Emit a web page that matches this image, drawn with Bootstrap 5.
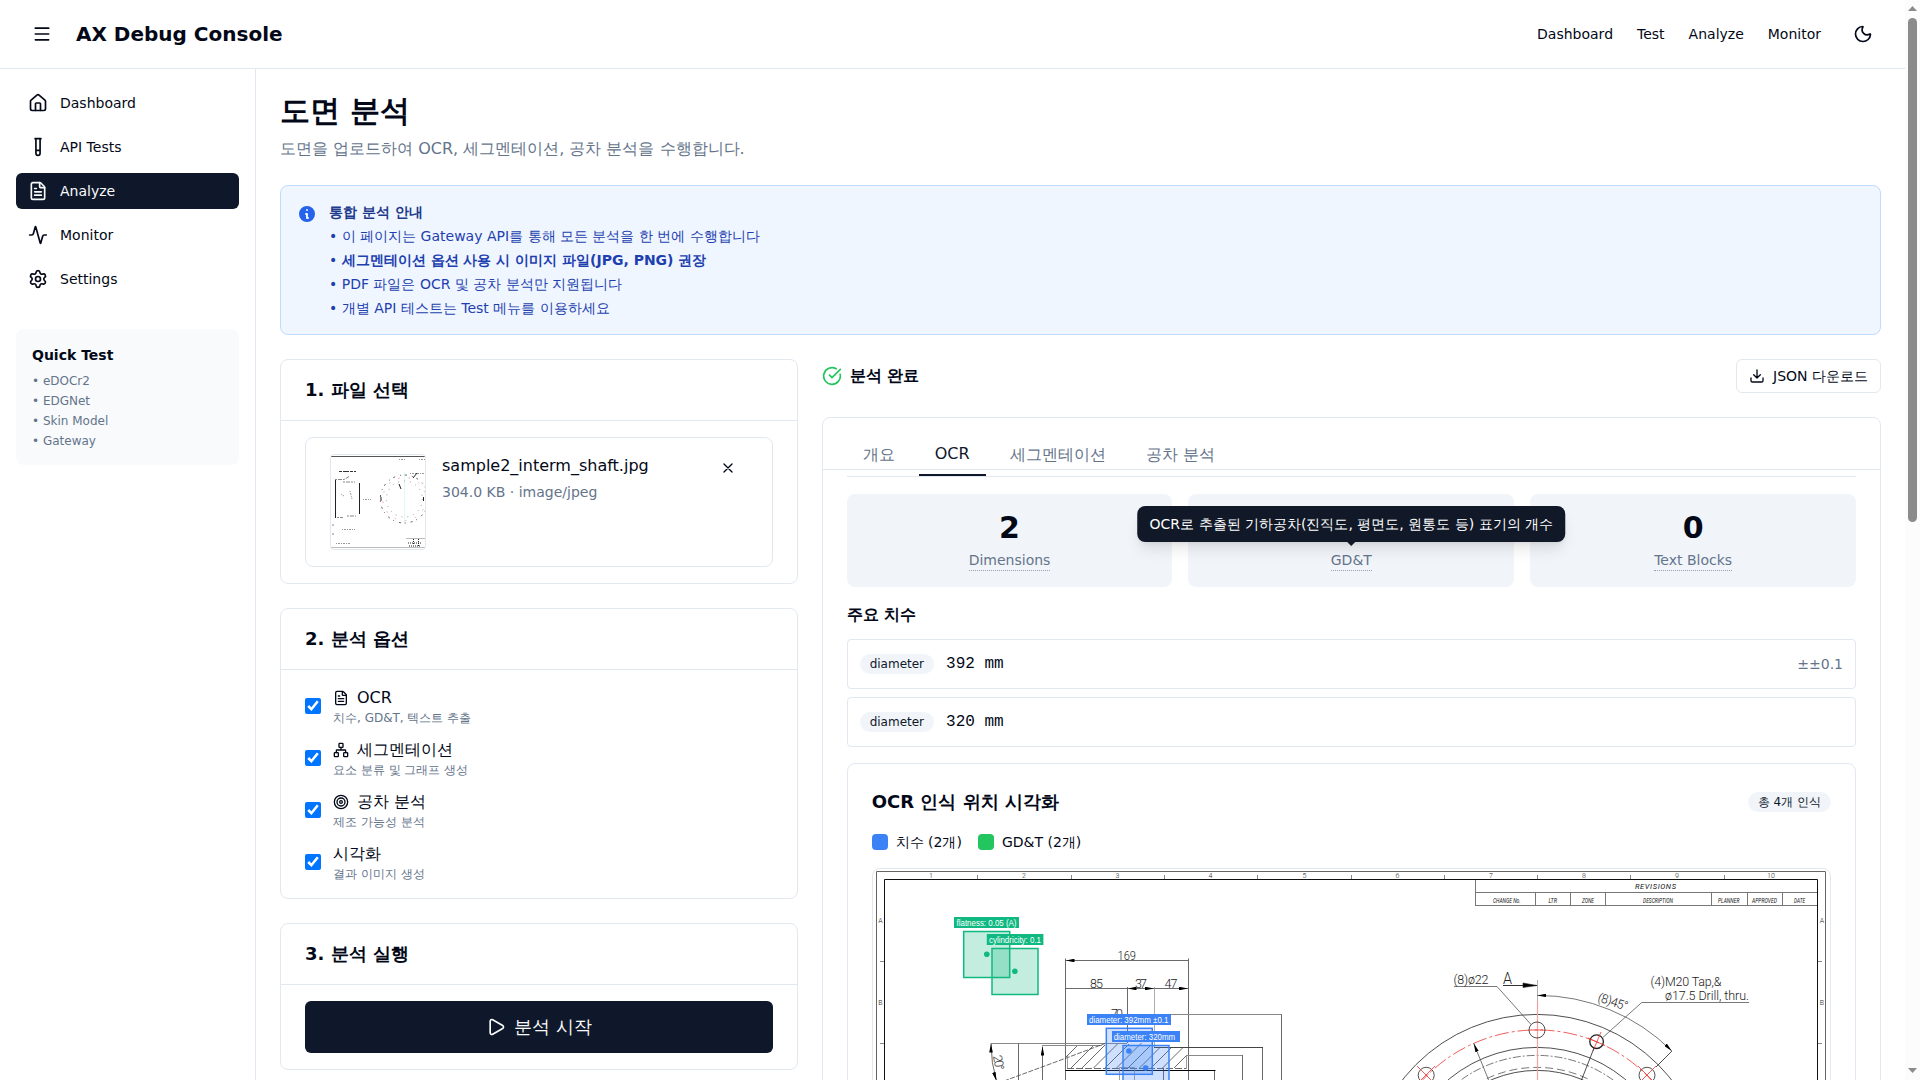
<!DOCTYPE html>
<html lang="ko">
<head>
<meta charset="utf-8">
<title>AX Debug Console</title>
<meta name="viewport" content="width=device-width, initial-scale=1">
<link href="https://cdn.jsdelivr.net/npm/bootstrap@5.3.0/dist/css/bootstrap.min.css" rel="stylesheet">
<style>
:root{--ink:#020817;--muted:#64748b;--line:#e2e8f0;--navy:#0f172a;--soft:#f1f5f9}
html,body{height:1080px;overflow:hidden}
body{font-family:"DejaVu Sans",sans-serif;font-size:16px;line-height:24px;color:var(--ink);background:#fff}
h1,h2,h3,h4,p,ul{margin:0}
.shell{width:1905px;height:1080px;overflow:hidden}
.topbar{height:69px;padding:16px 24px;border-bottom:1px solid var(--line)}
.brand{font-size:20px;line-height:28px;font-weight:700}
.topnav a,.sidenav a{color:var(--ink);text-decoration:none;font-size:14px;line-height:20px}
.ico{fill:none;stroke:currentColor;stroke-width:2;stroke-linecap:round;stroke-linejoin:round;flex-shrink:0;display:block}
.iconbtn{width:36px;height:36px;padding:8px;border:0;background:none;color:var(--ink)}
.sidebar{width:256px;height:1011px;padding:16px;border-right:1px solid var(--line);flex-shrink:0}
.sidenav a{height:36px;padding:8px 12px;border-radius:6px;gap:12px}
.sidenav a.current{background:var(--navy);color:#f8fafc}
.quick{margin-top:32px;padding:16px;border-radius:8px;background:#f8fafc}
.quick h3{font-size:14px;line-height:20px;font-weight:700;margin-bottom:8px}
.quick li{font-size:12px;line-height:16px;color:var(--muted)}
.page{padding:24px;min-width:0}
.page-title{font-size:30px;line-height:36px;font-weight:700}
.notice{padding:16px;border:1px solid #bfdbfe;border-radius:8px;background:#eff6ff;color:#1e40af;font-size:14px;line-height:20px;gap:12px}
.notice svg{margin-top:2px}
.notice h3{font-size:14px;line-height:20px;font-weight:700;color:#1e3a8a}
.layout{display:grid;grid-template-columns:repeat(3,minmax(0,1fr));gap:24px}
.span-two{grid-column:span 2}
.panel{border:1px solid var(--line);border-radius:8px}
.panel-head{height:61px;padding:16px 24px;border-bottom:1px solid var(--line)}
.panel-head h2,.viz h2{font-size:18px;line-height:28px;font-weight:700}
.panel-body{padding:16px 24px}
.filebox{border:1px solid var(--line);border-radius:8px;padding:16px 24px;height:130px}
.thumb{width:96px;height:96px;border:1px solid var(--line);border-radius:4px;overflow:hidden;flex-shrink:0}
.remove{width:40px;height:28px;padding:0;border:0;background:none;color:var(--ink)}
.gap-12{gap:12px}
.sm{font-size:14px;line-height:20px}
.dim{color:var(--muted)}
.opt input{width:16px;height:16px;margin:0;flex-shrink:0}
.opt .desc{font-size:12px;line-height:16px;color:var(--muted)}
.run{height:52px;border:0;border-radius:6px;background:var(--navy);color:#f8fafc;font-size:18px;line-height:28px}
.outline{height:34px;border:1px solid var(--line);border-radius:6px;padding:0 12px;background:#fff;color:var(--ink);font-size:14px;line-height:20px}
.ok{color:#22c55e}
.tabhead{height:52px;padding:16px 24px 0;border-bottom:1px solid var(--line)}
.tabs{height:43px;border-bottom:1px solid var(--line)}
.tabs button{border:0;border-bottom:2px solid transparent;background:none;padding:9px 16px 7px;height:42px;color:var(--muted);line-height:24px}
.tabs button.on{border-bottom-color:var(--navy);color:var(--navy);padding:8px 16px}
.results{padding:24px}
.stat{background:var(--soft);border-radius:8px;padding:16px;height:93px}
.num{font-size:30px;line-height:36px;font-weight:700}
.hint{font-size:14px;line-height:20px;color:var(--muted);border-bottom:1px dotted #94a3b8;margin-top:4px;position:relative}
.tipbox{position:absolute;left:50%;bottom:calc(100% + 8px);transform:translateX(-50%);background:#111827;color:#fff;white-space:nowrap;border-radius:8px;padding:8px 12px;box-shadow:0 10px 15px -3px rgba(0,0,0,.1),0 4px 6px -4px rgba(0,0,0,.1);z-index:5}
.tipbox::after{content:"";position:absolute;left:50%;bottom:-4px;margin-left:-4px;border:4px solid transparent;border-bottom:0;border-top-color:#111827}
.row-item{border:1px solid var(--line);border-radius:4px;padding:12px;height:50px}
.pill{height:20px;border-radius:10px;background:var(--soft);padding:2px 10px;font-size:12px;line-height:16px;color:var(--navy)}
.mono{font-family:"Liberation Mono",monospace}
.viz{border:1px solid var(--line);border-radius:8px;padding:24px}
.swatch{width:16px;height:16px;border-radius:4px}
.swatch-dim{background:#3b82f6}
.swatch-gdt{background:#22c55e}
.canvas-box{border:1px solid var(--line);border-radius:8px;overflow:hidden}
.canvas-box svg,.thumb svg{display:block}
.scroller{position:fixed;right:0;top:0;width:15px;height:1080px;background:#fcfcfc}
.cad text{font-family:Roboto,sans-serif;font-weight:300;fill:#222}
.cad .rev text{font-weight:400;fill:#111}
.cad .tag text{font-family:"Liberation Sans",sans-serif;font-weight:400;fill:#fff;font-size:8.6px}
</style>
<script src="https://cdn.jsdelivr.net/npm/bootstrap@5.3.0/dist/js/bootstrap.bundle.min.js"></script>
</head>
<body>
<div class="shell">
<header class="topbar d-flex align-items-center justify-content-between">
  <div class="d-flex align-items-center gap-3">
    <button class="iconbtn" aria-label="menu"><svg class="ico" width="20" height="20" viewBox="0 0 24 24"><path d="M4 5h16M4 12h16M4 19h16"/></svg></button>
    <div class="brand">AX Debug Console</div>
  </div>
  <nav class="topnav d-flex align-items-center gap-4">
    <a href="#">Dashboard</a><a href="#">Test</a><a href="#">Analyze</a><a href="#">Monitor</a>
    <button class="iconbtn" aria-label="theme"><svg class="ico" width="20" height="20" viewBox="0 0 24 24"><path d="M20.985 12.486a9 9 0 1 1-9.473-9.472c.405-.022.617.46.402.803a6 6 0 0 0 8.268 8.268c.344-.215.825-.004.803.401"/></svg></button>
  </nav>
</header>
<div class="d-flex">
<aside class="sidebar">
  <nav class="sidenav d-flex flex-column gap-2">
    <a href="#" class="d-flex align-items-center"><svg class="ico" width="20" height="20" viewBox="0 0 24 24"><path d="M15 21v-8a1 1 0 0 0-1-1h-4a1 1 0 0 0-1 1v8"/><path d="M3 10a2 2 0 0 1 .709-1.528l7-6a2 2 0 0 1 2.582 0l7 6A2 2 0 0 1 21 10v9a2 2 0 0 1-2 2H5a2 2 0 0 1-2-2z"/></svg>Dashboard</a>
    <a href="#" class="d-flex align-items-center"><svg class="ico" width="20" height="20" viewBox="0 0 24 24"><path d="M14.5 2v17.5c0 1.4-1.1 2.5-2.5 2.5c-1.4 0-2.5-1.1-2.5-2.5V2M8.5 2h7M14.5 16h-5"/></svg>API Tests</a>
    <a href="#" class="current d-flex align-items-center"><svg class="ico" width="20" height="20" viewBox="0 0 24 24"><path d="M6 22a2 2 0 0 1-2-2V4a2 2 0 0 1 2-2h8a2.4 2.4 0 0 1 1.704.706l3.588 3.588A2.4 2.4 0 0 1 20 8v12a2 2 0 0 1-2 2z"/><path d="M14 2v5a1 1 0 0 0 1 1h5M10 9H8M16 13H8M16 17H8"/></svg>Analyze</a>
    <a href="#" class="d-flex align-items-center"><svg class="ico" width="20" height="20" viewBox="0 0 24 24"><path d="M22 12h-2.48a2 2 0 0 0-1.93 1.46l-2.35 8.36a.25.25 0 0 1-.48 0L9.24 2.18a.25.25 0 0 0-.48 0l-2.35 8.36A2 2 0 0 1 4.49 12H2"/></svg>Monitor</a>
    <a href="#" class="d-flex align-items-center"><svg class="ico" width="20" height="20" viewBox="0 0 24 24"><path d="M9.671 4.136a2.34 2.34 0 0 1 4.659 0 2.34 2.34 0 0 0 3.319 1.915 2.34 2.34 0 0 1 2.33 4.033 2.34 2.34 0 0 0 0 3.831 2.34 2.34 0 0 1-2.33 4.033 2.34 2.34 0 0 0-3.319 1.915 2.34 2.34 0 0 1-4.659 0 2.34 2.34 0 0 0-3.32-1.915 2.34 2.34 0 0 1-2.33-4.033 2.34 2.34 0 0 0 0-3.831A2.34 2.34 0 0 1 6.35 6.051a2.34 2.34 0 0 0 3.319-1.915"/><circle cx="12" cy="12" r="3"/></svg>Settings</a>
  </nav>
  <div class="quick">
    <h3>Quick Test</h3>
    <ul class="list-unstyled d-flex flex-column gap-1"><li>• eDOCr2</li><li>• EDGNet</li><li>• Skin Model</li><li>• Gateway</li></ul>
  </div>
</aside>
<main class="page flex-grow-1">
  <h1 class="page-title mb-2">도면 분석</h1>
  <p class="dim mb-4">도면을 업로드하여 OCR, 세그멘테이션, 공차 분석을 수행합니다.</p>
  <section class="notice d-flex mb-4">
    <svg class="flex-shrink-0" width="20" height="20" viewBox="0 0 20 20" fill="#2563eb"><path fill-rule="evenodd" d="M18 10a8 8 0 11-16 0 8 8 0 0116 0zm-7-4a1 1 0 11-2 0 1 1 0 012 0zM9 9a1 1 0 000 2v3a1 1 0 001 1h1a1 1 0 100-2v-3a1 1 0 00-1-1H9z" clip-rule="evenodd"/></svg>
    <div class="d-flex flex-column gap-1">
      <h3>통합 분석 안내</h3>
      <div>• 이 페이지는 Gateway API를 통해 모든 분석을 한 번에 수행합니다</div>
      <div>• <b>세그멘테이션 옵션 사용 시 이미지 파일(JPG, PNG) 권장</b></div>
      <div>• PDF 파일은 OCR 및 공차 분석만 지원됩니다</div>
      <div>• 개별 API 테스트는 Test 메뉴를 이용하세요</div>
    </div>
  </section>
  <div class="layout">
    <div class="d-flex flex-column gap-4">
      <section class="panel">
        <div class="panel-head"><h2>1. 파일 선택</h2></div>
        <div class="panel-body">
          <div class="filebox d-flex gap-3">
            <div class="thumb"><svg width="94" height="94" viewBox="331 455 94 94" fill="none" stroke="#333" stroke-width="1">
              <path d="M331 456.500h94" stroke="#555"/><path d="M331 547.500h94M406 538.500h19" stroke="#bbb"/>
              <path d="M335.500 479v39M359.500 483v31" stroke="#222"/>
              <path d="M339 471.500h17" stroke-dasharray="3 1 6 1"/><path d="M335 479.500h9l5-3M343 482h12M337 517.500h6M347 516h9M332 525h3M332 534h3" stroke-dasharray="2 1 4 1" stroke="#888"/>
              <path d="M342 529.500h13M336 543.500h14M363 499.500h8M341 494l3 2M350 491l2 8M399 459.500h7M419 459.500h6M410 473.500h15" stroke-dasharray="1 1 2 1" stroke="#999"/>
              <path d="M404.500 472v52" stroke="#dffaf8"/>
              <circle cx="404.300" cy="499" r="24" stroke="#555" stroke-dasharray="1 4 2 5"/><circle cx="404.300" cy="499" r="21.500" stroke="#f2a5a5" stroke-dasharray="1.500 9"/><circle cx="404.300" cy="499" r="18" stroke="#999" stroke-dasharray="1 5"/>
              <path d="M381 497v4M423.500 497v4M399 484l2 5M417 473l-4 5" stroke="#222"/>
              <path d="M408 543h14M409 546h12M413.500 539v6M418.500 539v7" stroke-dasharray="1 1" stroke="#222"/></svg></div>
            <div class="flex-grow-1"><div>sample2_interm_shaft.jpg</div><div class="sm dim mt-1">304.0 KB · image/jpeg</div></div>
            <button class="remove d-flex align-items-center justify-content-center" aria-label="remove"><svg class="ico" width="16" height="16" viewBox="0 0 24 24"><path d="M18 6 6 18M6 6l12 12"/></svg></button>
          </div>
        </div>
      </section>
      <section class="panel">
        <div class="panel-head"><h2>2. 분석 옵션</h2></div>
        <div class="panel-body d-flex flex-column gap-12">
          <label class="opt d-flex align-items-center gap-12"><input type="checkbox" checked><span><span class="d-flex align-items-center gap-2"><svg class="ico" width="16" height="16" viewBox="0 0 24 24"><path d="M6 22a2 2 0 0 1-2-2V4a2 2 0 0 1 2-2h8a2.4 2.4 0 0 1 1.704.706l3.588 3.588A2.4 2.4 0 0 1 20 8v12a2 2 0 0 1-2 2z"/><path d="M14 2v5a1 1 0 0 0 1 1h5M10 9H8M16 13H8M16 17H8"/></svg>OCR</span><span class="desc d-block">치수, GD&amp;T, 텍스트 추출</span></span></label>
          <label class="opt d-flex align-items-center gap-12"><input type="checkbox" checked><span><span class="d-flex align-items-center gap-2"><svg class="ico" width="16" height="16" viewBox="0 0 24 24"><rect x="16" y="16" width="6" height="6" rx="1"/><rect x="2" y="16" width="6" height="6" rx="1"/><rect x="9" y="2" width="6" height="6" rx="1"/><path d="M5 16v-3a1 1 0 0 1 1-1h12a1 1 0 0 1 1 1v3M12 12V8"/></svg>세그멘테이션</span><span class="desc d-block">요소 분류 및 그래프 생성</span></span></label>
          <label class="opt d-flex align-items-center gap-12"><input type="checkbox" checked><span><span class="d-flex align-items-center gap-2"><svg class="ico" width="16" height="16" viewBox="0 0 24 24"><circle cx="12" cy="12" r="10"/><circle cx="12" cy="12" r="6"/><circle cx="12" cy="12" r="2"/></svg>공차 분석</span><span class="desc d-block">제조 가능성 분석</span></span></label>
          <label class="opt d-flex align-items-center gap-12"><input type="checkbox" checked><span><span class="d-block">시각화</span><span class="desc d-block">결과 이미지 생성</span></span></label>
        </div>
      </section>
      <section class="panel">
        <div class="panel-head"><h2>3. 분석 실행</h2></div>
        <div class="panel-body">
          <button class="run w-100 d-flex align-items-center justify-content-center gap-2"><svg class="ico" width="20" height="20" viewBox="0 0 24 24"><path d="M5 5a2 2 0 0 1 3.008-1.728l11.997 6.998a2 2 0 0 1 .003 3.458l-12 7A2 2 0 0 1 5 19z"/></svg>분석 시작</button>
        </div>
      </section>
    </div>
    <div class="span-two d-flex flex-column gap-4">
      <div class="d-flex align-items-center justify-content-between">
        <div class="d-flex align-items-center gap-2 fw-bold"><svg class="ico ok" width="20" height="20" viewBox="0 0 24 24"><path d="M21.801 10A10 10 0 1 1 17 3.335"/><path d="m9 11 3 3L22 4"/></svg>분석 완료</div>
        <button class="outline d-flex align-items-center gap-2"><svg class="ico" width="16" height="16" viewBox="0 0 24 24"><path d="M12 15V3M21 15v4a2 2 0 0 1-2 2H5a2 2 0 0 1-2-2v-4M7 10l5 5 5-5"/></svg>JSON 다운로드</button>
      </div>
      <section class="panel">
        <div class="tabhead"><div class="tabs d-flex gap-2"><button>개요</button><button class="on">OCR</button><button>세그멘테이션</button><button>공차 분석</button></div></div>
        <div class="results d-flex flex-column gap-3">
          <div class="row g-3">
            <div class="col-4"><div class="stat d-flex flex-column align-items-center"><div class="num">2</div><div class="hint">Dimensions</div></div></div>
            <div class="col-4"><div class="stat d-flex flex-column align-items-center"><div class="num">2</div><div class="hint">GD&amp;T<div class="tipbox">OCR로 추출된 기하공차(진직도, 평면도, 원통도 등) 표기의 개수</div></div></div></div>
            <div class="col-4"><div class="stat d-flex flex-column align-items-center"><div class="num">0</div><div class="hint">Text Blocks</div></div></div>
          </div>
          <div class="d-flex flex-column gap-12">
            <div class="fw-bold">주요 치수</div>
            <div class="d-flex flex-column gap-2">
              <div class="row-item d-flex align-items-center justify-content-between"><div class="d-flex align-items-center gap-12"><span class="pill">diameter</span><span class="mono">392 mm</span></div><span class="sm dim">±±0.1</span></div>
              <div class="row-item d-flex align-items-center justify-content-between"><div class="d-flex align-items-center gap-12"><span class="pill">diameter</span><span class="mono">320 mm</span></div></div>
            </div>
          </div>
          <div class="viz d-flex flex-column gap-3">
            <div class="d-flex align-items-center justify-content-between"><h2>OCR 인식 위치 시각화</h2><span class="pill">총 4개 인식</span></div>
            <div class="d-flex gap-3 sm"><span class="d-flex align-items-center gap-2"><i class="swatch swatch-dim"></i>치수 (2개)</span><span class="d-flex align-items-center gap-2"><i class="swatch swatch-gdt"></i>GD&amp;T (2개)</span></div>
            <div class="canvas-box">
<svg class="cad" width="957" height="300" viewBox="873 869 957 300" fill="none" stroke="#222" stroke-width=".8">
  <defs><marker id="tip" viewBox="0 0 10 4" refX="10" refY="2" markerWidth="9" markerHeight="3.600" markerUnits="userSpaceOnUse" orient="auto-start-reverse"><path d="M0 0L10 2L0 4z" fill="#000" stroke="none"/></marker></defs>
  <g>
    <path d="M876.500 1169V871.500H1825.500V1169" stroke="#666" stroke-width="1"/>
    <path d="M884.500 1169V879.500H1817.500V1169" stroke="#111" stroke-width="1"/>
    <path d="M977.500 875v4M1071.500 875v4M1164.500 875v4M1257.500 875v4M1351.500 875v4M1444.500 875v4M1537.500 875v4M1630.500 875v4M1724.500 875v4M880 961.500h4M880 1043.500h4M1818 961.500h4M1818 1043.500h4" stroke="#888" stroke-width="1"/>
  </g>
  <g font-size="7" text-anchor="middle" stroke="none">
    <text x="931" y="878">1</text><text x="1024" y="878">2</text><text x="1117.500" y="878">3</text><text x="1210.500" y="878">4</text><text x="1304.500" y="878">5</text><text x="1397.500" y="878">6</text><text x="1491" y="878">7</text><text x="1584" y="878">8</text><text x="1677" y="878">9</text><text x="1771" y="878">10</text>
    <text x="880.500" y="922.500">A</text><text x="880.500" y="1005">B</text><text x="1822" y="922.500">A</text><text x="1822" y="1005">B</text>
  </g>
  <g stroke="#777" stroke-width="1"><path d="M1475.500 880v26M1475 892.500H1817M1475 905.500H1817M1535.500 893v13M1570.500 893v13M1605.500 893v13M1711.500 893v13M1747.500 893v13M1782.500 893v13"/></g>
  <g class="rev" font-size="8" font-style="italic" stroke="none">
    <text x="1635" y="889" font-size="7.500" textLength="41" lengthAdjust="spacing">REVISIONS</text>
    <text x="1493" y="903" textLength="27.500" lengthAdjust="spacingAndGlyphs">CHANGE No.</text><text x="1548.500" y="903" textLength="8.500" lengthAdjust="spacingAndGlyphs">LTR</text><text x="1582" y="903" textLength="12" lengthAdjust="spacingAndGlyphs">ZONE</text><text x="1643" y="903" textLength="30" lengthAdjust="spacingAndGlyphs">DESCRIPTION</text><text x="1718" y="903" textLength="21.500" lengthAdjust="spacingAndGlyphs">PLANNER</text><text x="1752" y="903" textLength="25" lengthAdjust="spacingAndGlyphs">APPROVED</text><text x="1794" y="903" textLength="11" lengthAdjust="spacingAndGlyphs">DATE</text>
  </g>
  <!-- shaft section -->
  <g stroke="#444">
    <path d="M1065.500 958.500V1169M1188.500 958.500V1169M1127.500 987v56"/><path d="M1154.500 987v60" stroke="#999"/>
    <path d="M1065.500 960.500H1188M1065.500 988.500H1127M1154.500 988.500H1188" marker-start="url(#tip)" marker-end="url(#tip)"/><path d="M1127.500 988.500H1154" marker-start="url(#tip)" marker-end="url(#tip)"/>
    <path d="M1154 1014.500H1282M1186 1055.500H1243M991 1043.500H1127M1042 1045.500H1102" stroke="#888" stroke-width="1"/><path d="M1154 1047.500H1263" stroke-width="1"/>
    <path d="M1281.500 1169V1014.500M1262.500 1169V1047.500M1242.500 1169V1055.500M1214.500 1169V1070.500M1163.500 1169V1068M1018.500 1169V1043.500M1042.500 1169V1046.500" marker-end="url(#tip)"/>
    <path d="M1065.500 1070.500H1215.500" stroke="#000" stroke-width="1"/>
    <path d="M991 1043.500Q991 1063 996.500 1081" marker-start="url(#tip)" marker-end="url(#tip)"/>
    <path d="M1004 1081L1065 1058.500L1105 1043.500" stroke-dasharray="5 1.500"/>
    <path d="M1067 1068.500H1186.500" stroke-dasharray="7 2"/><path d="M1067.500 1055v13M1186.500 1055.500v13M1119.500 1169V1067.500H1134.500V1169" stroke="#888"/>
    <path d="M1066 1057l11-11M1071 1068l22-22M1082 1068l23-23M1093.500 1068l24-24M1105 1068l24-24M1116.500 1068l25-25M1128 1068l22-22M1139.500 1068l20-20M1151 1068l20-20M1162.500 1068l20-20M1174 1068l12-12"/>
  </g>
  <g font-size="12.500" stroke="none"><text x="1117.500" y="959.500" textLength="18.500" lengthAdjust="spacingAndGlyphs">169</text><text x="1090" y="987.500" textLength="13">85</text><text x="1135" y="987.500" textLength="12">37</text><text x="1164.500" y="987.500" textLength="13">47</text><text x="1111" y="1018" textLength="12">70</text><text transform="translate(993 1056) rotate(80)" textLength="15">20°</text></g>
  <!-- flange face -->
  <g>
    <circle cx="1537" cy="1185.400" r="171"/><circle cx="1537" cy="1185.400" r="138"/><circle cx="1537" cy="1185.400" r="115"/>
    <circle cx="1537" cy="1185.400" r="130" stroke="#555" stroke-dasharray="8 2 2 2"/><circle cx="1537" cy="1185.400" r="118" stroke="#555" stroke-dasharray="8 4"/>
    <circle cx="1537" cy="1185.400" r="155.500" stroke="#e33" stroke-dasharray="14 3 3 3"/>
    <path d="M1537.500 1001v168" stroke="#f3a0a0" stroke-width="1.200"/><path d="M1537.500 980v21" stroke="#999"/>
    <circle cx="1537" cy="1030" r="8"/><circle cx="1596.600" cy="1041.700" r="6.800" stroke-width="1.300"/><circle cx="1647" cy="1075.300" r="8"/><circle cx="1426.200" cy="1075.300" r="8"/>
    <path d="M1593 1051l8-19M1588 1038l17 7.500M1638 1066l18 18M1656 1066l-18 18M1417 1066l18 18M1435 1066l-18 18M1531 1030h12" stroke="#e33"/>
    <path d="M1672 1051l-16 16M1594 1048L1581.500 1080"/>
    <path d="M1537.400 995.400A190 190 0 0 1 1671.800 1051" marker-start="url(#tip)" marker-end="url(#tip)" stroke="#555"/>
    <path d="M1454 986.500H1497L1531 1024.500M1749 1002.500H1641.700L1603 1037.300M1489 1081L1473.700 1043.300" marker-end="url(#tip)" stroke="#555"/>
    <path d="M1503 985.500H1537" stroke="#333" stroke-width="1"/><path d="M1523 983l14 2.500-14 2z" stroke-width=".6" fill="#000"/>
  </g>
  <g font-size="12.500" stroke="none">
    <text x="1453.500" y="983.500" textLength="35">(8)ø22</text><text x="1503" y="984" font-size="17" textLength="9" lengthAdjust="spacingAndGlyphs">A</text>
    <text x="1650.500" y="985.500" textLength="71">(4)M20 Tap,&amp;</text><text x="1665" y="1000" textLength="84">ø17.5 Drill, thru.</text>
    <text transform="translate(1597 1001) rotate(18)" textLength="31">(8)45°</text>
  </g>
  <!-- recognised regions -->
  <g stroke="#10b981" stroke-width="1.500" fill="#10b981" fill-opacity=".25"><rect x="963.700" y="931.500" width="46" height="46"/><rect x="992" y="948.500" width="46" height="46"/></g>
  <g stroke="#3b82f6" stroke-width="1.500" fill="#3b82f6" fill-opacity=".25"><rect x="1106.300" y="1028.300" width="46" height="46"/><rect x="1123" y="1045.500" width="46" height="46"/></g>
  <g stroke="none"><g fill="#10b981"><circle cx="986.800" cy="954.300" r="2.800"/><circle cx="1014.900" cy="971.300" r="2.800"/><path d="M954 917h65v11h-65zM986.800 934h56.600v11h-56.600z"/></g>
  <g fill="#3b82f6"><circle cx="1128.900" cy="1051" r="2.800"/><circle cx="1145.700" cy="1068" r="2.800"/><path d="M1087 1014h84v11h-84zM1112 1031h68v11h-68z"/></g></g>
  <g class="tag" stroke="none"><text x="956.500" y="926" textLength="60" lengthAdjust="spacingAndGlyphs">flatness: 0.05 (A)</text><text x="989" y="943" textLength="52" lengthAdjust="spacingAndGlyphs">cylindricity: 0.1</text><text x="1089" y="1023" textLength="79.500" lengthAdjust="spacingAndGlyphs">diameter: 392mm ±0.1</text><text x="1113.700" y="1040" textLength="61.500" lengthAdjust="spacingAndGlyphs">diameter: 320mm</text></g>
</svg>
            </div>
          </div>
        </div>
      </section>
    </div>
  </div>
</main>
</div>
</div>
<div class="scroller"><svg class="d-block" width="15" height="1080"><path d="M3 11L7.500 6L12 11zM3 1068h9l-4.500 5z" fill="#8b8b8b"/><rect x="3" y="18" width="9" height="504" rx="4.500" fill="#8b8b8b"/></svg></div>
</body>
</html>
